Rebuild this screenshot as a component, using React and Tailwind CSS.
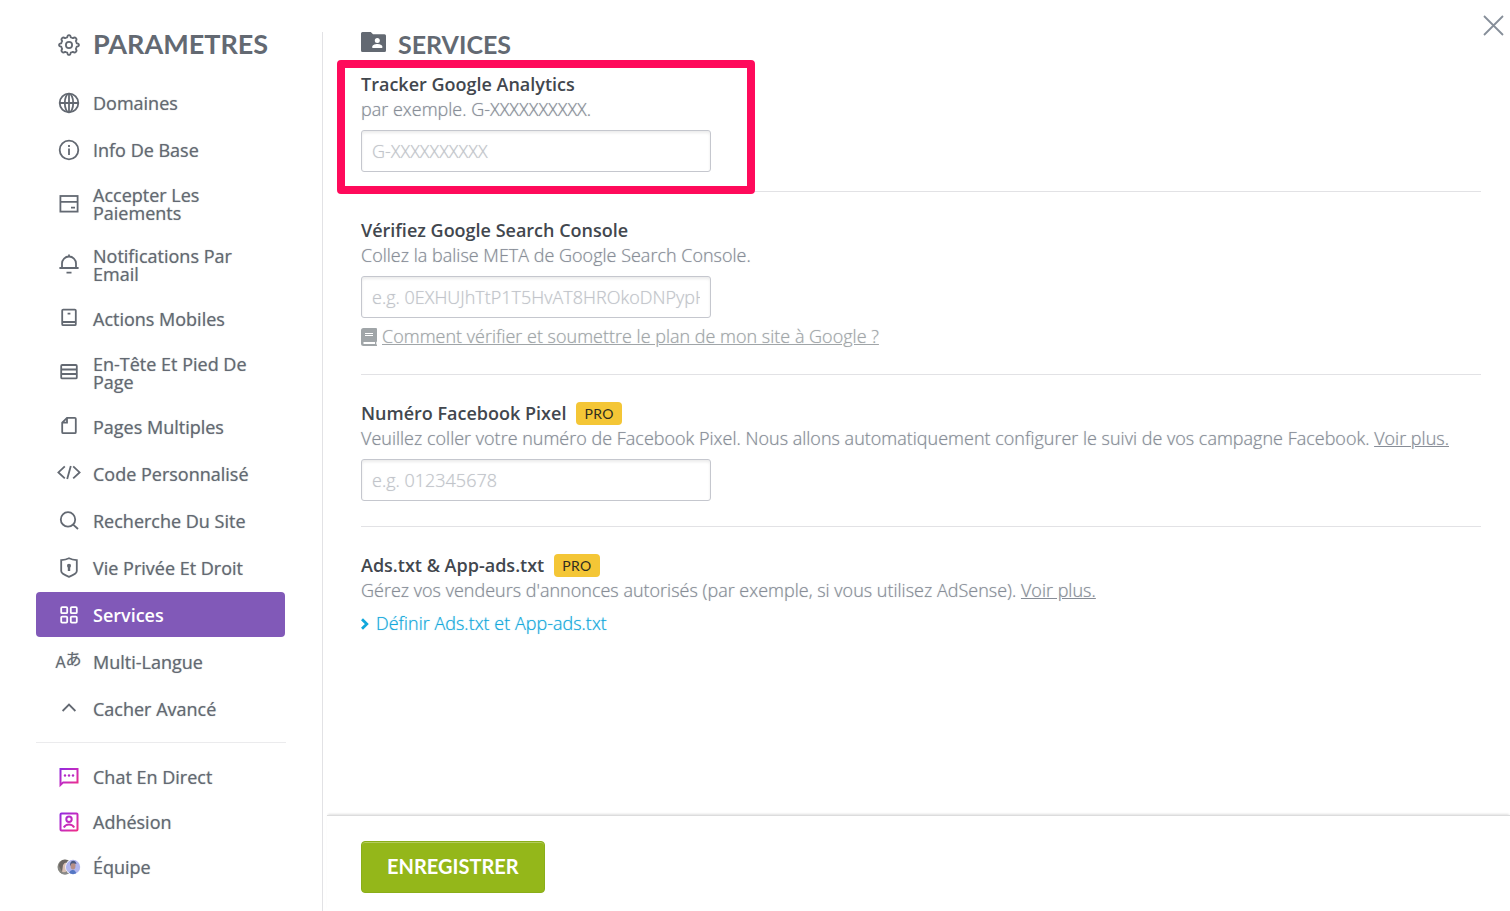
import clsx from "clsx";

const Icon = ({ children, className, size = 24 }) => (
	<svg
		width={size}
		height={size}
		viewBox="0 0 24 24"
		fill="none"
		stroke="currentColor"
		strokeWidth="1.8"
		className={clsx("shrink-0", className)}
		aria-hidden="true"
	>
		{children}
	</svg>
);

const GearIcon = () => (
	<Icon>
		<path
			strokeLinejoin="round"
			d="M10.3 4.3 C10.5 1.3 13.5 1.3 13.7 4.3 C14.5 4.5 15.3 4.8 15.9 5.2 C18.2 3.3 20.7 5.8 18.8 8.1 C19.2 8.7 19.5 9.5 19.7 10.3 C22.7 10.5 22.7 13.5 19.7 13.7 C19.5 14.5 19.2 15.3 18.8 15.9 C20.7 18.2 18.2 20.7 15.9 18.8 C15.3 19.2 14.5 19.5 13.7 19.7 C13.5 22.7 10.5 22.7 10.3 19.7 C9.5 19.5 8.7 19.2 8.1 18.8 C5.8 20.7 3.3 18.2 5.2 15.9 C4.8 15.3 4.5 14.5 4.3 13.7 C1.3 13.5 1.3 10.5 4.3 10.3 C4.5 9.5 4.8 8.7 5.2 8.1 C3.3 5.8 5.8 3.3 8.1 5.2 C8.7 4.8 9.5 4.5 10.3 4.3 Z"
		/>
		<circle cx="12" cy="12" r="3.1" />
	</Icon>
);

const GlobeIcon = () => (
	<Icon>
		<circle cx="12" cy="12" r="9.3" />
		<ellipse cx="12" cy="12" rx="4.2" ry="9.3" />
		<path d="M2.7 12h18.6M12 2.7v18.6" />
	</Icon>
);

const InfoIcon = () => (
	<Icon>
		<circle cx="12" cy="12" r="9.3" />
		<path d="M12 10.5v6.5M12 7v2" />
	</Icon>
);

const CardIcon = () => (
	<Icon>
		<rect x="3.4" y="4" width="17.2" height="15.6" />
		<path d="M3.4 9.8h17.2M14 15.6h4" />
	</Icon>
);

const BellIcon = () => (
	<Icon>
		<path d="M5 15v-4.5a7 7 0 0 1 14 0V15M2.4 15h19.2M9.5 19.6h5M12 1.6v2" />
	</Icon>
);

const MobileIcon = () => (
	<Icon>
		<rect x="5.2" y="2.6" width="13.6" height="15.6" rx="1" />
		<path d="M5.2 15h13.6M10.6 6.6h2.8" />
	</Icon>
);

const HeaderFooterIcon = () => (
	<Icon>
		<rect x="4.2" y="4" width="15.6" height="13.4" rx="1" />
		<path d="M4.2 8.5h15.6M4.2 13h15.6" />
	</Icon>
);

const PagesIcon = () => (
	<Icon>
		<path d="M10 2.8h7.8a1 1 0 0 1 1 1v13.4a1 1 0 0 1-1 1H6.2a1 1 0 0 1-1-1V7.6zM10 2.8v4.8H5.2" />
	</Icon>
);

const CodeIcon = () => (
	<Icon>
		<path d="M7.8 4.4 1.4 10.4l6.4 6M16.2 4.4l6.4 6-6.4 6M13.8 4l-3.6 13" />
	</Icon>
);

const SearchIcon = () => (
	<Icon>
		<circle cx="11" cy="10.4" r="7.2" />
		<path d="m16.2 15.6 4.8 4.4" />
	</Icon>
);

const ShieldIcon = () => (
	<Icon>
		<path d="M12 2.2c2.4 1.2 5 1.7 7.8 1.9V15c0 1.6-3.6 4.2-7.8 5.8-4.2-1.6-7.8-4.2-7.8-5.8V4.1c2.8-.2 5.4-.7 7.8-1.9z" />
		<path d="M12 8.2v6.8" strokeWidth="2.4" />
		<circle cx="12" cy="9.8" r="2" fill="currentColor" stroke="none" />
	</Icon>
);

const GridIcon = () => (
	<Icon>
		<rect x="4.2" y="4.2" width="6" height="6" rx="1" />
		<rect x="13.8" y="4.2" width="6" height="6" rx="1" />
		<rect x="4.2" y="13.6" width="6" height="6" rx="1" />
		<rect x="13.8" y="13.6" width="6" height="6" rx="1" />
	</Icon>
);

const LangIcon = () => (
	<span aria-hidden="true" className="flex whitespace-nowrap">
		<span className="text-base leading-5">A</span>
		<span className="-mt-1 font-['Noto_Sans_CJK_JP',sans-serif] text-base leading-5">あ</span>
	</span>
);

const ChevronUpIcon = () => (
	<Icon>
		<path d="m5.6 14 6.4-6.4 6.4 6.4" />
	</Icon>
);

const PinkGradient = ({ id }) => (
	<linearGradient id={id} x1="2" y1="2" x2="22" y2="22" gradientUnits="userSpaceOnUse">
		<stop offset="0" stopColor="#8a2be2" />
		<stop offset="0.5" stopColor="#c42bc0" />
		<stop offset="1" stopColor="#f72f7c" />
	</linearGradient>
);

const ChatIcon = () => (
	<Icon>
		<defs>
			<PinkGradient id="chat-gradient" />
		</defs>
		<path stroke="url(#chat-gradient)" strokeWidth="2" d="M3.5 20V4h17v13.4H6.2z" />
		<g fill="#b52bc8" stroke="none">
			<circle cx="8" cy="10.5" r="1.2" />
			<circle cx="12" cy="10.5" r="1.2" />
			<circle cx="16" cy="10.5" r="1.2" />
		</g>
	</Icon>
);

const MemberIcon = () => (
	<Icon>
		<defs>
			<PinkGradient id="member-gradient" />
		</defs>
		<g stroke="url(#member-gradient)" strokeWidth="2">
			<rect x="3.5" y="3.5" width="17" height="17" rx="1" />
			<circle cx="12" cy="9.3" r="2.7" />
			<path d="M6.8 17.5c1.2-2.2 3-3 5.2-3s4 .8 5.2 3" />
		</g>
	</Icon>
);

const TeamIcon = () => (
	<Icon>
		<defs>
			<clipPath id="team-left">
				<circle cx="8" cy="12" r="7.5" />
			</clipPath>
			<clipPath id="team-right">
				<circle cx="16" cy="12" r="7.2" />
			</clipPath>
		</defs>
		<g stroke="none" clipPath="url(#team-left)">
			<rect width="16" height="24" fill="#85857f" />
			<ellipse cx="7" cy="12" rx="3.5" ry="5.5" fill="#d8bfb4" />
			<path d="M2 11c0-7 9-9 10-3-3-1-4-1-6 2l-1 7z" fill="#6c6662" />
			<path d="M2 20c2-3 9-4 12 0z" fill="#8a8a8a" />
		</g>
		<circle cx="16" cy="12" r="7.8" fill="#fff" stroke="none" />
		<g stroke="none" clipPath="url(#team-right)">
			<rect x="8" width="16" height="24" fill="#b1b6ee" />
			<ellipse cx="16" cy="10.5" rx="2.5" ry="4" fill="#b68f87" />
			<path d="M13 10c0-5 5.5-6 6.5-1-3-1-4.5-1-5.5 0l-.5 2z" fill="#4c5a80" />
			<path d="M12 20c0-4 2-5 4-5s3 2 4 5z" fill="#5577c4" />
		</g>
	</Icon>
);

const FolderIcon = () => (
	<svg width="25" height="20" viewBox="0 0 25 20" className="shrink-0" aria-hidden="true">
		<path
			fill="currentColor"
			d="M1.5 0h8.3L12 2.2h11.5A1.5 1.5 0 0 1 25 3.7v14.8a1.5 1.5 0 0 1-1.5 1.5h-22A1.5 1.5 0 0 1 0 18.5v-17A1.5 1.5 0 0 1 1.5 0z"
		/>
		<circle cx="16.3" cy="8.5" r="2.5" fill="#fff" />
		<path fill="#fff" d="M11.3 16v-1.5c0-1.6 3-2.5 5-2.5s5 .9 5 2.5V16z" />
	</svg>
);

const BookIcon = () => (
	<svg width="16" height="18" viewBox="0 0 16 18" className="shrink-0" aria-hidden="true">
		<path
			fill="currentColor"
			d="M2.5 0H15a1 1 0 0 1 1 1v12.5L15.3 14v2.5h.7V17.5a.5.5 0 0 1-.5.5H2.5A2.5 2.5 0 0 1 0 15.5v-13A2.5 2.5 0 0 1 2.5 0z"
		/>
		<path stroke="#fff" strokeWidth="1" d="M4 5.5h8M4 7.5h8" />
		<path stroke="#fff" strokeWidth="2" d="M2.5 15h11.5" />
	</svg>
);

const mainLinks = [
	{ label: "Domaines", icon: GlobeIcon },
	{ label: "Info De Base", icon: InfoIcon },
	{ label: "Accepter Les Paiements", icon: CardIcon, tall: true },
	{ label: "Notifications Par Email", icon: BellIcon, tall: true },
	{ label: "Actions Mobiles", icon: MobileIcon },
	{ label: "En-Tête Et Pied De Page", icon: HeaderFooterIcon, tall: true },
	{ label: "Pages Multiples", icon: PagesIcon },
	{ label: "Code Personnalisé", icon: CodeIcon },
	{ label: "Recherche Du Site", icon: SearchIcon },
	{ label: "Vie Privée Et Droit", icon: ShieldIcon },
	{ label: "Services", icon: GridIcon, active: true },
	{ label: "Multi-Langue", icon: LangIcon },
	{ label: "Cacher Avancé", icon: ChevronUpIcon },
];

const extraLinks = [
	{ label: "Chat En Direct", icon: ChatIcon },
	{ label: "Adhésion", icon: MemberIcon },
	{ label: "Équipe", icon: TeamIcon },
];

const NavItem = ({ label, icon: ItemIcon, tall, active }) => (
	<a
		href="#"
		aria-current={active ? "page" : undefined}
		className={clsx(
			"flex items-center gap-3 rounded pl-5 pr-8 text-lg leading-[18px]",
			tall ? "h-[59px]" : "h-[45px]",
			active ? "bg-[#8159b8] font-semibold text-white" : "font-normal [text-shadow:0_0_1px_#63697299]"
		)}
	>
		<span className="flex w-[25px] shrink-0 justify-center">
			<ItemIcon />
		</span>
		<span>{label}</span>
	</a>
);

const ProBadge = () => (
	<span className="rounded bg-[#f4c636] px-2 font-['Lato',sans-serif] text-sm leading-[23px] font-normal tracking-wide text-[#2e2c20]">
		PRO
	</span>
);

const Hint = ({ children }) => (
	<p className="text-[#878d97] [text-shadow:0_0_1px_#878d9799]">{children}</p>
);

const TextField = ({ id, placeholder }) => (
	<input
		id={id}
		type="text"
		placeholder={placeholder}
		className="mt-2 block h-[42px] w-[350px] max-w-full rounded-[3px] border border-[#c5c7ce] px-[10px] text-lg text-[#4a4f56] shadow-[inset_0_2px_3px_rgba(0,0,0,0.08)] outline-none placeholder:text-[#c1c4ca] placeholder:[text-shadow:0_0_1px_#c1c4ca99]"
	/>
);

const App = () => {
	return (
		<div className="flex min-h-screen bg-white font-['Open_Sans',sans-serif] text-lg font-light text-[#636972]">
			<aside className="mt-8 w-[323px] shrink-0 border-r border-[#e2e2e5] pl-9">
				<div className="flex h-[25px] items-center gap-3 pl-5">
					<span className="flex w-[25px] justify-center">
						<GearIcon />
					</span>
					<h1 className="pb-[2px] font-['Lato',sans-serif] text-[27px] leading-7 font-bold">PARAMETRES</h1>
				</div>
				<nav className="mt-[23px] mr-[37px] flex flex-col gap-[2px]">
					{mainLinks.map((item) => (
						<NavItem key={item.label} {...item} />
					))}
				</nav>
				<nav className="mt-[11px] mr-9 border-t border-[#ebebed] pt-[11px]">
					{extraLinks.map((item) => (
						<NavItem key={item.label} {...item} />
					))}
				</nav>
			</aside>

			<div className="relative flex min-w-0 flex-1 flex-col">
				<button type="button" aria-label="Fermer" className="absolute top-[15px] right-[6px] text-[#868e99]">
					<svg width="21" height="21" viewBox="0 0 21 21" fill="none" stroke="currentColor" strokeWidth="1.8">
						<path d="M1 1l19 19M20 1L1 20" />
					</svg>
				</button>

				<main className="flex-1 pt-8 pr-[29px] pl-[38px]">
					<div className="flex h-[26px] gap-3">
						<FolderIcon />
						<h2 className="font-['Lato',sans-serif] text-[25px] leading-6 font-bold">SERVICES</h2>
					</div>

					<section className="relative mt-[14px] border-b border-[#e2e2e5] pb-[19px] leading-[25px]">
						<div className="pointer-events-none absolute -top-3 -bottom-[3px] -left-6 w-[418px] rounded border-8 border-[#ff0a5b]" />
						<label htmlFor="analytics" className="block font-semibold text-[#42474e]">
							Tracker Google Analytics
						</label>
						<Hint>par exemple. G-XXXXXXXXXX.</Hint>
						<TextField id="analytics" placeholder="G-XXXXXXXXXX" />
					</section>

					<section className="border-b border-[#e2e2e5] pt-[26px] pb-[25px] leading-[25px]">
						<label htmlFor="console" className="block font-semibold text-[#42474e]">
							Vérifiez Google Search Console
						</label>
						<Hint>Collez la balise META de Google Search Console.</Hint>
						<TextField id="console" placeholder="e.g. 0EXHUJhTtP1T5HvAT8HROkoDNPypH" />
						<div className="mt-[6px] flex items-center gap-[5px] text-[#a0a5a8] [text-shadow:0_0_1px_#a0a5a899]">
							<BookIcon />
							<a href="#" className="underline">
								Comment vérifier et soumettre le plan de mon site à Google ?
							</a>
						</div>
					</section>

					<section className="border-b border-[#e2e2e5] pt-[26px] pb-[25px] leading-[25px]">
						<div className="flex items-center gap-[10px]">
							<label htmlFor="pixel" className="font-semibold text-[#42474e]">
								Numéro Facebook Pixel
							</label>
							<ProBadge />
						</div>
						<Hint>
							Veuillez coller votre numéro de Facebook Pixel. Nous allons automatiquement configurer le suivi de vos
							campagne Facebook.{" "}
							<a href="#" className="underline">
								Voir plus.
							</a>
						</Hint>
						<TextField id="pixel" placeholder="e.g. 012345678" />
					</section>

					<section className="pt-[26px] leading-[25px]">
						<div className="flex items-center gap-[10px]">
							<h3 className="font-semibold text-[#42474e]">Ads.txt &amp; App-ads.txt</h3>
							<ProBadge />
						</div>
						<Hint>
							Gérez vos vendeurs d'annonces autorisés (par exemple, si vous utilisez AdSense).{" "}
							<a href="#" className="underline">
								Voir plus.
							</a>
						</Hint>
						<a
							href="#"
							className="mt-2 flex items-center gap-[7px] text-[#12a8dc] [text-shadow:0_0_1px_#12a8dc99]"
						>
							<svg width="8" height="12" viewBox="0 0 8 12" fill="none" stroke="currentColor" strokeWidth="2.8" aria-hidden="true">
								<path d="M1 1.2 5.8 6 1 10.8" />
							</svg>
							Définir Ads.txt et App-ads.txt
						</a>
					</section>
				</main>

				<footer className="ml-1 h-24 border-t border-[#dcdcdd] pt-[25px] pl-[34px] shadow-[0_-2px_2px_-1px_rgba(0,0,0,0.12)]">
					<button
						type="button"
						className="h-[52px] rounded border border-[#8aae19] bg-[#94b71a] px-[25px] pb-[2px] font-['Lato',sans-serif] text-xl font-bold text-white shadow-[inset_0_1px_0_rgba(255,255,255,0.3)]"
					>
						ENREGISTRER
					</button>
				</footer>
			</div>
		</div>
	);
};

export default App;
